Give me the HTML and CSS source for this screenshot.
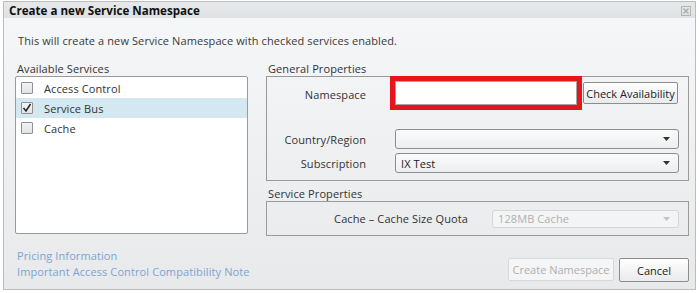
FILE: index.html
```html
<!DOCTYPE html>
<html lang="en">
<head>
    <meta charset="UTF-8">
    <title>Create a new Service Namespace</title>
    <link rel="stylesheet" href="styles.css">
</head>
<body>
    <div class="dialog">
        <div class="titlebar">
            <span class="title">Create a new Service Namespace</span>
            <svg class="close-icon" width="10" height="10" viewBox="0 0 10 10">
                <rect x="0.5" y="0.5" width="9" height="9" fill="none" stroke="#b4b4b4"/>
                <path d="M2.5 2.5 L7.5 7.5 M7.5 2.5 L2.5 7.5" stroke="#a8a8a8" stroke-width="1.2"/>
            </svg>
        </div>
        <div class="content">
            <div class="intro">This will create a new Service Namespace with checked services enabled.</div>
            <div class="columns">
                <div class="services">
                    <div class="section-label">Available Services</div>
                    <div class="listbox">
                        <div class="list-row">
                            <span class="checkbox"></span>
                            <span>Access Control</span>
                        </div>
                        <div class="list-row selected">
                            <span class="checkbox">
                                <svg width="10" height="10" viewBox="0 0 10 10"><path d="M1.5 5 L4 8 L8.5 1" fill="none" stroke="#222" stroke-width="1.5"/></svg>
                            </span>
                            <span>Service Bus</span>
                        </div>
                        <div class="list-row">
                            <span class="checkbox"></span>
                            <span>Cache</span>
                        </div>
                    </div>
                </div>
                <div class="properties">
                    <div class="section-label">General Properties</div>
                    <div class="group general">
                        <div class="field-row namespace-row">
                            <label class="field-label">Namespace</label>
                            <input type="text" class="text-input">
                            <button class="button check-button">Check Availability</button>
                        </div>
                        <div class="field-row country-row">
                            <label class="field-label">Country/Region</label>
                            <div class="dropdown wide">
                                <span></span>
                                <svg width="7" height="4" viewBox="0 0 7 4"><path d="M0 0 H7 L3.5 4 Z" fill="#333"/></svg>
                            </div>
                        </div>
                        <div class="field-row subscription-row">
                            <label class="field-label">Subscription</label>
                            <div class="dropdown wide">
                                <span>IX Test</span>
                                <svg width="7" height="4" viewBox="0 0 7 4"><path d="M0 0 H7 L3.5 4 Z" fill="#333"/></svg>
                            </div>
                        </div>
                    </div>
                    <div class="section-label second">Service Properties</div>
                    <div class="group service">
                        <div class="field-row cache-row">
                            <label class="field-label">Cache &ndash; Cache Size Quota</label>
                            <div class="dropdown disabled">
                                <span>128MB Cache</span>
                                <svg width="7" height="4" viewBox="0 0 7 4"><path d="M0 0 H7 L3.5 4 Z" fill="#c4c4c4"/></svg>
                            </div>
                        </div>
                    </div>
                </div>
            </div>
            <div class="footer">
                <div class="links">
                    <a href="#">Pricing Information</a>
                    <a href="#">Important Access Control Compatibility Note</a>
                </div>
                <div class="actions">
                    <button class="button create-button" disabled>Create Namespace</button>
                    <button class="button cancel-button">Cancel</button>
                </div>
            </div>
        </div>
    </div>
</body>
</html>
```

FILE: styles.css
```css
/* Page */
body {
    margin: 0;
    padding: 1px 0 0 3px;
    background: #fff;
    font-family: "Open Sans", "Noto Sans", sans-serif;
    font-size: 11px;
    letter-spacing: 0.1px;
    color: #333;
}

.dialog {
    width: 693px;
    height: 289px;
    box-sizing: border-box;
    border: 1px solid #bcbcbc;
    background: linear-gradient(#f6f7f9 0%, #f1f3f5 30%, #e7e9eb 100%);
    display: flex;
    flex-direction: column;
}

/* Title bar */
.titlebar {
    height: 16px;
    display: flex;
    align-items: center;
    justify-content: space-between;
    padding: 0 4px 0 5px;
    background: linear-gradient(#e6e8ea, #dfe2e5);
}

.title {
    font-weight: bold;
    font-size: 11.6px;
    letter-spacing: 0;
    color: #111;
}

.close-icon {
    margin-top: 1px;
}

/* Body */
.content {
    flex: 1;
    padding: 0 6px 0 11px;
}

.intro {
    line-height: 16px;
    margin: 15px 0 13px 3px;
    color: #3a3a3a;
}

.columns {
    display: grid;
    grid-template-columns: 233px 423px;
    column-gap: 18px;
}

.section-label {
    line-height: 14px;
    padding-left: 2px;
    color: #333;
}

.section-label.second {
    margin-top: 6px;
}

/* Services list */
.listbox {
    height: 158px;
    box-sizing: border-box;
    border: 1px solid #9a9a9a;
    border-radius: 2px;
    background: #fff;
    padding-top: 1px;
}

.list-row {
    height: 20px;
    display: flex;
    align-items: center;
    gap: 11px;
    padding-left: 5px;
}

.list-row.selected {
    background: #d4e8f1;
}

.checkbox {
    width: 12px;
    height: 12px;
    box-sizing: border-box;
    border: 1px solid #8f9193;
    border-radius: 1px;
    background: linear-gradient(#f2f3f4, #e1e3e5);
    display: flex;
    align-items: center;
    justify-content: center;
}

/* Property groups */
.group {
    box-sizing: border-box;
    border: 1px solid #9a9a9a;
}

.group.general {
    height: 105px;
    padding: 4px 0 0 0;
}

.group.service {
    height: 35px;
    display: flex;
    align-items: center;
}

.field-row {
    display: flex;
    align-items: center;
}

.field-label {
    width: 99px;
    text-align: right;
    margin-right: 29px;
    color: #333;
}

.namespace-row {
    height: 24px;
}

.namespace-row .field-label {
    padding-top: 3px;
}

.country-row {
    margin-top: 24px;
}

.subscription-row {
    margin-top: 4px;
}

.text-input {
    width: 182px;
    height: 24px;
    box-sizing: border-box;
    margin: 0;
    border: 1px solid #a4a4a4;
    background: #fff;
    outline: 5px solid #e8141b;
    outline-offset: 0;
}

.check-button {
    margin-left: 6px;
    width: 95px;
    height: 22px;
    letter-spacing: 0;
}

.dropdown {
    height: 20px;
    box-sizing: border-box;
    border: 1px solid #8e8e8e;
    border-radius: 3px;
    background: linear-gradient(#fbfbfb, #eceef0);
    display: flex;
    align-items: center;
    justify-content: space-between;
    padding: 0 8px 0 5px;
    color: #222;
}

.dropdown.wide {
    width: 284px;
}

.cache-row .field-label {
    width: 201px;
    margin-right: 24px;
}

.dropdown.disabled {
    width: 187px;
    height: 18px;
    border-color: #d6d6d6;
    background: #f3f4f5;
    color: #b0b0b0;
}

/* Buttons */
.button {
    font-family: inherit;
    font-size: 11px;
    box-sizing: border-box;
    border: 1px solid #8c8c8c;
    border-radius: 2px;
    background: linear-gradient(#ffffff, #e9eaeb);
    color: #222;
    padding: 0;
    cursor: pointer;
}

/* Footer */
.footer {
    display: flex;
    justify-content: space-between;
    align-items: flex-start;
    margin-top: 12px;
}

.links {
    display: flex;
    flex-direction: column;
    padding-left: 2px;
}

.links a {
    line-height: 16px;
    color: #7ba5d5;
    text-decoration: none;
}

.actions {
    display: flex;
    gap: 5px;
    margin-top: 10px;
}

.create-button {
    width: 106px;
    height: 23px;
    border-color: #d8d8d8;
    background: #f4f5f6;
    color: #b0b0b0;
    cursor: default;
}

.cancel-button {
    width: 70px;
    height: 24px;
}
```
